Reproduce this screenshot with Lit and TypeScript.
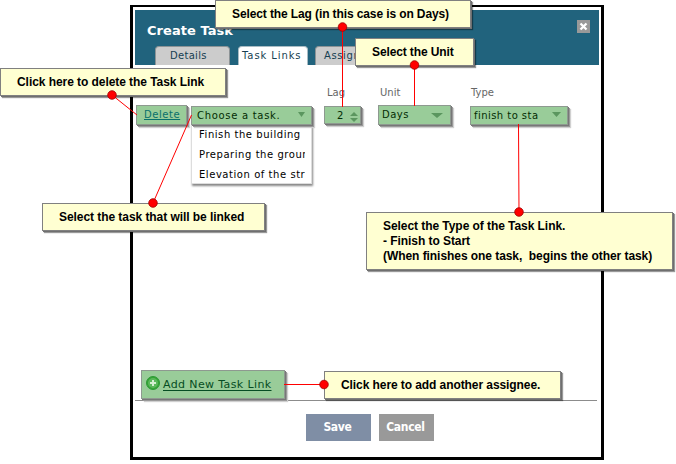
import { LitElement, html, svg, css } from "lit";
import { customElement } from "lit/decorators.js";
import { styleMap } from "lit/directives/style-map.js";

interface Callout {
  x: number; y: number; w: number; h: number; lines: string[]; spacing: number;
}

const callouts: Callout[] = [
  { x: 215, y: 0, w: 256, h: 28, lines: ["Select the Lag (in this case is on Days)"], spacing: -0.11 },
  { x: 355, y: 38, w: 119, h: 28, lines: ["Select the Unit"], spacing: -0.12 },
  { x: 0, y: 68, w: 226, h: 28, lines: ["Click here to delete the Task Link"], spacing: -0.06 },
  { x: 42, y: 203, w: 223, h: 28, lines: ["Select the task that will be linked"], spacing: -0.06 },
  { x: 366, y: 212, w: 307, h: 58, lines: ["Select the Type of the Task Link.", "- Finish to Start", "(When finishes one task,\u00a0 begins the other task)"], spacing: -0.06 },
  { x: 324, y: 371, w: 237, h: 28, lines: ["Click here to add another assignee."], spacing: -0.08 },
];

// Each leader runs from the dot on its callout to the control it explains.
const leaders = [
  [342.5, 27, 342.5, 107],
  [414.5, 65, 414.5, 106],
  [112, 95, 137, 115],
  [153, 203, 191.5, 115],
  [519, 212, 518.5, 124],
  [324, 384.5, 284, 384.5],
];

@customElement("app-root")
export class AppRoot extends LitElement {
  static styles = css`
    :host { display: block; position: relative; width: 676px; height: 464px; overflow: hidden; background: #fff;
      font-family: "DejaVu Sans", Verdana, sans-serif; font-size: 10px; color: #000; }
    * { box-sizing: border-box; }
    .dialog { width: 474px; height: 455px; margin-left: 130px; border: 3px solid #000; border-top-width: 2px; padding: 3px 2px 0; display: flex; flex-direction: column; }
    .stage { padding-top: 5px; }
    .head { height: 55px; background: #21637d; display: flex; flex-direction: column; justify-content: space-between; flex: none; }
    .bar { display: flex; justify-content: space-between; padding: 10px 9px 0 12px; }
    .title { font: bold 13px/21px "DejaVu Sans", sans-serif; color: #fff; letter-spacing: .05px; white-space: nowrap; }
    .close { width: 13px; height: 13px; background: #999; display: block; }
    .tabs { display: flex; gap: 8px; padding-left: 20px; }
    .tab { height: 19px; width: 75px; background: #ccc; border-radius: 4px 4px 0 0; border-top: 1px solid #8c9396; border-left: 1px solid #8c9396; border-right: 1px solid #8c9396; color: #163f52; font-size: 10px; line-height: 17px; padding-left: 14px; letter-spacing: .3px; white-space: nowrap; }
    .tab.on { width: 70px; margin-right: -1px; background: #fff; border-color: #a9bcc4; padding-left: 3px; letter-spacing: .9px; }
    .tab:last-child { padding-left: 8px; letter-spacing: .6px; }
    .body { height: 305px; padding-top: 21px; flex: none; }
    .labels, .row { display: flex; }
    .labels { height: 12px; line-height: 13px; color: #666; padding-left: 192px; }
    .l1 { width: 53px; } .l2 { width: 91px; }
    .row { padding: 7px 0 0 1px; height: 27px; align-items: flex-start; }
    .green { background: #9c9; border: 1px solid #8e9990; box-shadow: 1px 1px 0 #777, 2px 2px 0 #999, 3px 3px 1px #d0d0d0; color: #042c04; height: 20px; line-height: 17px; white-space: nowrap; display: flex; letter-spacing: .7px; padding-left: 5px; }
    .arrow { margin: 5px 6px 0 auto; width: 7px; height: 5px; flex: none; display: block; }
    .link { color: #08706b; text-decoration: underline; padding-left: 7px; width: 51px; letter-spacing: .55px; }
    .pick { width: 121px; margin: 1px 0 0 4px; height: 19px; }
    .num { width: 37px; height: 18px; margin: 1px 0 0 12px; padding-left: 12px; }
    .unit { width: 73px; margin-left: 17px; padding-left: 3px; line-height: 18px; letter-spacing: .5px; }
    .unit .arrow { width: 12px; margin: 7px 7px 0 auto; }
    .type { width: 98px; margin: 1px 0 0 19px; padding-left: 3px; height: 19px; letter-spacing: .45px; }
    .type .arrow { width: 9px; }
    .spin { margin: 5px 2px 0 auto; width: 8px; height: 10px; }
    .menu { width: 121px; height: 60px; margin: -1px 0 0 56px; background: #fff; border: 1px solid #ddd; border-top: 0; box-shadow: 1px 2px 2px #888; padding: 0 6px 0 7px; letter-spacing: .55px; }
    .item { height: 20px; line-height: 22px; overflow: hidden; white-space: nowrap; }
    .foot { height: 31px; border-bottom: 1px solid #8c8c8c; width: 462px; padding-left: 6px; flex: none; }
    .add { width: 144px; height: 29px; line-height: 26px; color: #064d23; align-items: center; padding-left: 4px; font-size: 11px; letter-spacing: .38px; text-decoration: none; }
    .add svg { margin-top: -3px; }
    .add u { margin-left: 3px; text-underline-offset: 2px; }
    .actions { display: flex; gap: 8px; padding: 13px 0 0 171px; }
    .btn { height: 27px; line-height: 26px; color: #fff; text-align: center; font-family: "DejaVu Sans Condensed", "DejaVu Sans", sans-serif; font-stretch: condensed; font-size: 12px; font-weight: bold; width: 55px; letter-spacing: -.3px; padding-right: 2px; }
    .save { width: 65px; background: #7f8ea5; } .cancel { background: #999; }
    .callout { position: absolute; background: #ffffd2; border: 1px solid #808080; box-shadow: 1px 1px 0 #6f6f6f, 2px 2px 1px rgba(0,0,0,.4); font: bold 12px/15px "Liberation Sans", Arial, sans-serif; padding: 6px 0 0 16px; white-space: nowrap; }
    .leaders { position: absolute; left: 0; top: 0; pointer-events: none; }
  `;

  private arrow() {
    return html`<svg class="arrow" viewBox="0 0 9 5" preserveAspectRatio="none"><path d="M0 0H9L4.5 5Z" fill="#5b965f"/></svg>`;
  }

  render() {
    return html`
      <div class="stage"><div class="dialog">
        <div class="head">
          <div class="bar"><span class="title">Create Task</span>
            <svg class="close" viewBox="0 0 13 13"><path d="M3.5 3.5L9.5 9.5M9.5 3.5L3.5 9.5" stroke="#fff" stroke-width="2.3"/></svg></div>
          <div class="tabs"><div class="tab">Details</div><div class="tab on">Task Links</div><div class="tab">Assignees</div></div>
        </div>
        <div class="body">
          <div class="labels"><span class="l1">Lag</span><span class="l2">Unit</span><span>Type</span></div>
          <div class="row">
            <div class="green link">Delete</div>
            <div class="green pick">Choose a task.${this.arrow()}</div>
            <div class="green num">2<svg class="spin" viewBox="0 0 8 10"><path d="M0 4L4 0L8 4ZM0 6H8L4 10Z" fill="#5b965f"/></svg></div>
            <div class="green unit">Days${this.arrow()}</div>
            <div class="green type">finish to sta${this.arrow()}</div>
          </div>
          <div class="menu">${["Finish the building", "Preparing the ground", "Elevation of the str"].map((t) => html`<div class="item">${t}</div>`)}</div>
        </div>
        <div class="foot"><div class="green add">
          <svg width="14" height="14" viewBox="0 0 14 14"><circle cx="7" cy="7" r="6.5" fill="#35a535" stroke="#2f9a37"/><circle cx="7" cy="7" r="5" fill="#5cb85c"/><path d="M7 4V10M4 7H10" stroke="#d4efd0" stroke-width="2"/></svg>
          <u>Add New Task Link</u></div></div>
        <div class="actions"><div class="btn save">Save</div><div class="btn cancel">Cancel</div></div>
      </div></div>
      ${callouts.map((c) => html`<div class="callout" style=${styleMap({ left: c.x + "px", top: c.y + "px", width: c.w + "px", height: c.h + "px", letterSpacing: c.spacing + "px" })}>${c.lines.map((l) => html`<div>${l}</div>`)}</div>`)}
      <svg class="leaders" width="676" height="464">${leaders.map(([x, y, a, b]) => svg`<line x1=${x} y1=${y} x2=${a} y2=${b} stroke="#f00" stroke-width="1"/><circle cx=${x} cy=${y} r="4.3" fill="#f00" stroke="#a00000" stroke-width=".8"/>`)}</svg>
    `;
  }
}
